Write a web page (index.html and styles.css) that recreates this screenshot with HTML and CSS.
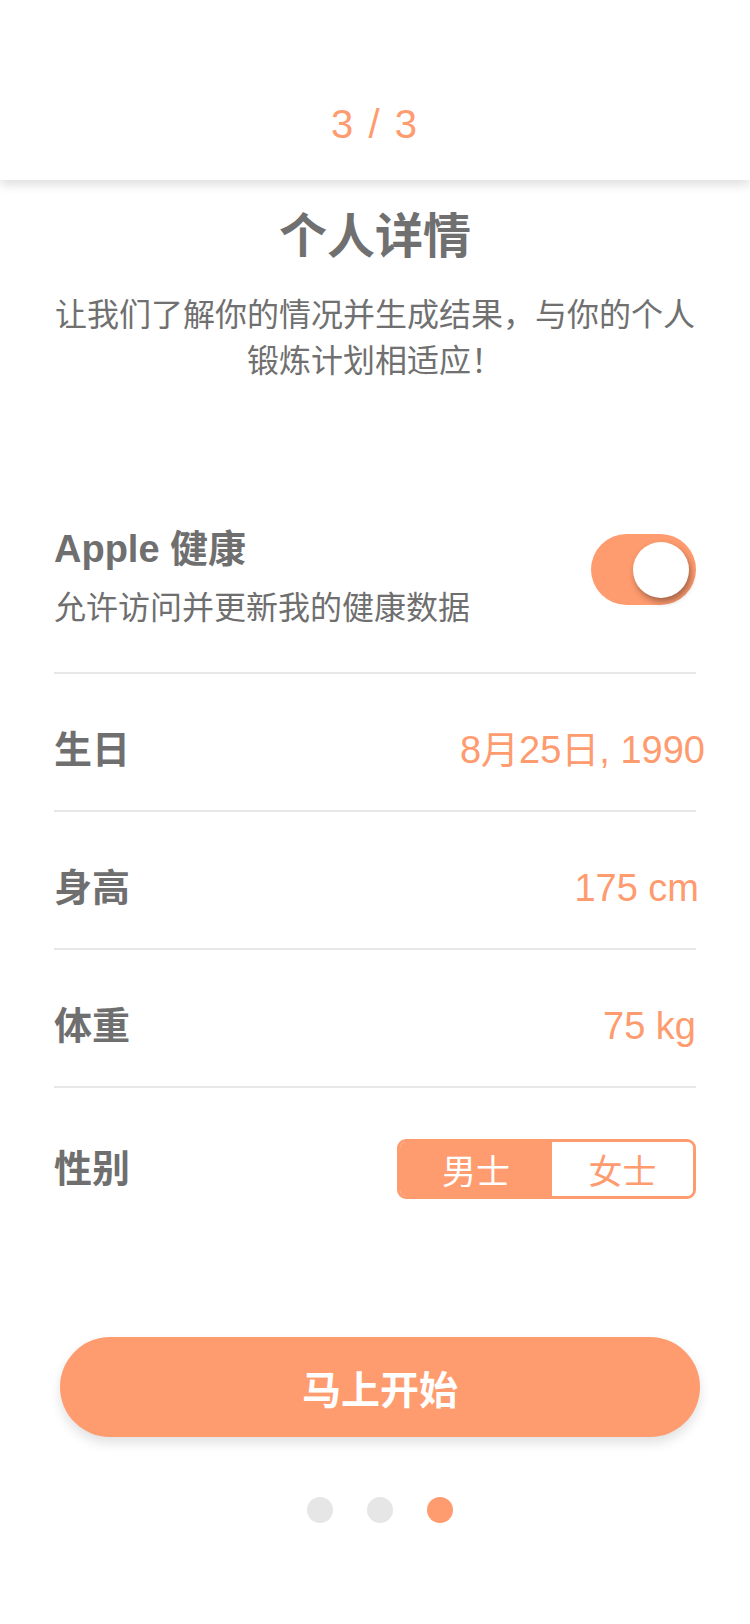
FILE: index.html
```html
<!DOCTYPE html>
<html lang="zh-CN">

<head>
    <meta charset="UTF-8">
    <meta name="viewport" content="width=device-width, initial-scale=1.0">
    <title>个人详情</title>
    <link rel="stylesheet" href="styles.css">
</head>

<body>
    <div class="header">
        <span class="step">3 / 3</span>
    </div>

    <div class="intro">
        <h2>个人详情</h2>
        <p>让我们了解你的情况并生成结果，与你的个人锻炼计划相适应！</p>
    </div>

    <div class="details">
        <div class="health">
            <div class="health-text">
                <div class="health-title">Apple 健康</div>
                <div class="health-desc">允许访问并更新我的健康数据</div>
            </div>
            <div class="toggle on">
                <div class="knob"></div>
            </div>
        </div>

        <div class="row">
            <span class="label">生日</span>
            <span class="value date">8月25日, 1990</span>
        </div>
        <div class="row">
            <span class="label">身高</span>
            <span class="value height">175 cm</span>
        </div>
        <div class="row">
            <span class="label">体重</span>
            <span class="value">75 kg</span>
        </div>
        <div class="row last">
            <span class="label">性别</span>
            <div class="segment">
                <span class="seg-item active">男士</span>
                <span class="seg-item">女士</span>
            </div>
        </div>
    </div>

    <button type="button" class="start">马上开始</button>

    <div class="dots">
        <span class="dot"></span>
        <span class="dot"></span>
        <span class="dot current"></span>
    </div>
</body>

</html>
```

FILE: styles.css
```css
body {
    margin: 0;
    width: 750px;
    font-family: "Liberation Sans", "Noto Sans CJK SC", sans-serif;
    color: #6f6f6f;
    background-color: #fff;
}

.header {
    position: relative;
    z-index: 1;
    height: 180px;
    box-sizing: border-box;
    padding-top: 104px;
    text-align: center;
    background-color: #fff;
    box-shadow: 0 5px 10px rgba(0, 0, 0, 0.13);
}

.step {
    font-size: 40px;
    line-height: 40px;
    letter-spacing: 2px;
    color: #fe9b6f;
}

.intro {
    padding: 33px 50px 0;
    text-align: center;
}

.intro h2 {
    margin: 0;
    font-size: 48px;
    line-height: 48px;
    font-weight: 700;
    color: #707070;
}

.intro p {
    margin: 31px 0 0;
    font-size: 32px;
    line-height: 46px;
    color: #707070;
}

.details {
    padding: 0 54px;
    margin-top: 145px;
}

.health {
    display: flex;
    justify-content: space-between;
    align-items: flex-start;
    padding-bottom: 44px;
    border-bottom: 2px solid #e8e8e8;
}

.health-title {
    font-size: 38px;
    line-height: 40px;
    font-weight: 700;
}

.health-desc {
    margin-top: 19px;
    font-size: 32px;
    line-height: 40px;
}

.toggle {
    display: flex;
    align-items: center;
    justify-content: flex-start;
    width: 105px;
    height: 71px;
    box-sizing: border-box;
    padding: 0 7px;
    margin-top: 5px;
    border-radius: 36px;
    background-color: #e6e6e6;
}

.toggle.on {
    justify-content: flex-end;
    background-color: #fe9b6f;
}

.knob {
    width: 56px;
    height: 56px;
    border-radius: 50%;
    background-color: #fff;
    box-shadow: 2px 4px 6px rgba(0, 0, 0, 0.35);
}

.row {
    display: flex;
    justify-content: space-between;
    align-items: center;
    padding: 56px 0 40px;
    border-bottom: 2px solid #e8e8e8;
}

.row.last {
    padding: 51px 0 0;
    border-bottom: none;
}

.label {
    font-size: 38px;
    line-height: 40px;
    font-weight: 700;
}

.value {
    font-size: 38px;
    line-height: 40px;
    color: #fe9b6f;
}

/* the design's values don't share one right edge */
.value.date {
    margin-right: -9px;
}

.value.height {
    margin-right: -3px;
}

.segment {
    display: flex;
    width: 299px;
    height: 60px;
    box-sizing: border-box;
    border: 3px solid #fe9b6f;
    border-radius: 9px;
    overflow: hidden;
}

.seg-item {
    display: flex;
    align-items: center;
    justify-content: center;
    flex: 1;
    font-size: 34px;
    color: #fe9b6f;
    background-color: #fff;
}

.seg-item.active {
    flex: 0 0 152px;
    color: #fff;
    background-color: #fe9b6f;
}

.start {
    display: block;
    width: 640px;
    height: 100px;
    margin: 138px 0 0 60px;
    border: none;
    border-radius: 50px;
    background-color: #fe9c70;
    color: #fff;
    font-family: "Noto Sans CJK SC", sans-serif;
    font-size: 39px;
    font-weight: 700;
    box-shadow: 0 6px 12px rgba(0, 0, 0, 0.12);
    cursor: pointer;
}

.dots {
    display: flex;
    justify-content: center;
    gap: 34px;
    margin: 60px 0 0 10px;
}

.dot {
    width: 26px;
    height: 26px;
    border-radius: 50%;
    background-color: #e6e6e6;
}

.dot.current {
    background-color: #fe9b6f;
}
```
